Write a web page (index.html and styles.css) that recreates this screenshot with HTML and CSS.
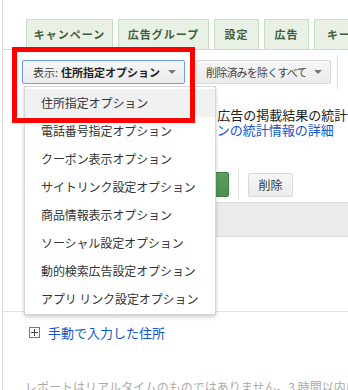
FILE: index.html
```html
<!DOCTYPE html>
<html lang="ja">

<head>
    <meta charset="utf-8">
    <meta name="viewport" content="width=device-width, initial-scale=1.0">
    <title>住所表示オプション</title>
    <link rel="stylesheet" href="styles.css">
</head>

<body>
    <div class="page">
        <nav class="tabs">
            <div class="tab t1">キャンペーン</div>
            <div class="tab t2">広告グループ</div>
            <div class="tab t3">設定</div>
            <div class="tab t4">広告</div>
            <div class="tab t5">キーワード</div>
        </nav>

        <div class="toolbar">
            <button class="knap aktiv">表示: <b>住所指定オプション</b><span class="pil"></span></button>
            <button class="knap slet">削除済みを除くすべて<span class="pil"></span></button>
            <span class="skille"></span>
        </div>

        <div class="stats">
            <p>このキャンペーンに含まれる広告の掲載結果の統計情報</p>
            <p>詳細については、<a href="#">キャンペーンの統計情報の詳細</a></p>
        </div>

        <div class="actions">
            <button class="gron">+ 住所表示オプション</button>
            <span class="lodret"></span>
            <button class="knap lille">削除</button>
        </div>

        <div class="band"></div>

        <div class="linje"></div>

        <div class="manuel">
            <span class="plus"></span>
            <a href="#">手動で入力した住所</a>
        </div>

        <p class="note">レポートはリアルタイムのものではありません。3 時間以内に発生したクリック</p>

        <ul class="menu">
            <li class="valgt">住所指定オプション</li>
            <li>電話番号指定オプション</li>
            <li>クーポン表示オプション</li>
            <li>サイトリンク設定オプション</li>
            <li>商品情報表示オプション</li>
            <li>ソーシャル設定オプション</li>
            <li>動的検索広告設定オプション</li>
            <li>アプリ リンク設定オプション</li>
        </ul>

        <div class="ramme"></div>
    </div>
</body>

</html>
```

FILE: styles.css
```css
body {
    margin: 0;
    font-family: "Noto Sans CJK JP", "Liberation Sans", sans-serif;
    color: #222;
    background-color: white;
    overflow: hidden;
}

.page {
    position: relative;
    margin-left: 2px;
    border-left: 1px solid #dcdcdc;
    height: 390px;
    overflow: hidden;
}

/* faner */
.tabs {
    display: flex;
    gap: 5px;
    padding-top: 19px;
    padding-left: 23px;
    border-bottom: 1px solid #c9dcc4;
}

.tab {
    flex: none;
    height: 30px;
    box-sizing: border-box;
    border: 1px solid #c9dcc4;
    border-bottom: none;
    background-color: #e9f1e6;
    color: #3f5d3d;
    font-size: 11px;
    font-weight: bold;
    letter-spacing: 1px;
    line-height: 29px;
    text-align: center;
}

.t1 { width: 87px; }
.t2 { width: 91px; }
.t3 { width: 45px; }
.t4 { width: 45px; }
.t5 { width: 90px; text-align: left; padding-left: 12px; }

/* knapper */
.toolbar {
    display: flex;
    align-items: center;
    margin-top: 10px;
    padding-left: 19px;
    height: 24px;
}

.knap {
    display: flex;
    align-items: center;
    height: 24px;
    box-sizing: border-box;
    border: 1px solid #d9d9d9;
    border-radius: 2px;
    background: linear-gradient(#f6f6f6, #ececec);
    font-family: "Noto Sans CJK JP", sans-serif;
    font-size: 11px;
    color: #444;
    padding: 0 8px 0 10px;
    white-space: nowrap;
}

.knap b {
    color: #222;
    margin-left: 3px;
}

.aktiv {
    width: 163px;
    border-color: #6d9eeb;
}

.slet {
    width: 135px;
    margin-left: 11px;
    padding-left: 9px;
    letter-spacing: -0.8px;
}

.pil {
    width: 0;
    height: 0;
    border-left: 4px solid transparent;
    border-right: 4px solid transparent;
    border-top: 4px solid #777;
    margin-left: auto;
}

.skille {
    width: 1px;
    height: 34px;
    background-color: #dcdcdc;
    margin-left: 6px;
}

/* statistik */
.stats {
    margin-top: 23px;
    padding-left: 46px;
    font-size: 13px;
    line-height: 15px;
    white-space: nowrap;
}

.stats p {
    margin: 0;
}

a {
    color: #1155cc;
    text-decoration: none;
}

.actions {
    display: flex;
    align-items: center;
    margin-top: 35px;
    padding-left: 26px;
    height: 25px;
}

.gron {
    width: 200px;
    height: 25px;
    border: 1px solid #3f7f43;
    border-radius: 2px;
    background: linear-gradient(#5aa05e, #4f8f52);
    color: white;
    font-size: 11px;
}

.lodret {
    width: 1px;
    height: 31px;
    background-color: #e3e3e3;
    margin-left: 9px;
}

.lille {
    width: 45px;
    height: 24px;
    margin-left: 9px;
    padding: 0;
    justify-content: center;
    font-size: 12px;
    color: #333;
}

.band {
    margin-top: 5px;
    margin-left: 23px;
    height: 33px;
    background-color: #ebebeb;
    border-top: 1px solid #dcdcdc;
    border-bottom: 1px solid #dcdcdc;
}

.linje {
    margin-top: 74px;
    border-top: 1px solid #e0e0e0;
}

.manuel {
    display: flex;
    align-items: center;
    margin-top: 15px;
    padding-left: 26px;
    font-size: 13px;
    height: 11px;
}

.plus {
    position: relative;
    width: 9px;
    height: 9px;
    border: 1px solid #777;
    margin-right: 8px;
}

.plus::before,
.plus::after {
    content: "";
    position: absolute;
    background-color: #444;
}

.plus::before {
    left: 1px;
    top: 4px;
    width: 7px;
    height: 1px;
}

.plus::after {
    left: 4px;
    top: 1px;
    width: 1px;
    height: 7px;
}

.note {
    margin: 40px 0 0 22px;
    font-size: 12px;
    color: #aaa;
    white-space: nowrap;
}

/* rullemenu */
.menu {
    position: absolute;
    left: 21px;
    top: 86px;
    width: 190px;
    margin: 0;
    padding: 2px 0 1px;
    list-style: none;
    background-color: white;
    border: 1px solid #d6d6d6;
    box-shadow: 0 2px 4px rgba(0, 0, 0, 0.2);
}

.menu li {
    height: 28px;
    line-height: 28px;
    padding-left: 16px;
    font-size: 12px;
    letter-spacing: -0.1px;
    color: #333;
    white-space: nowrap;
}

.menu .valgt {
    background-color: #f1f1f1;
}

.ramme {
    position: absolute;
    left: 9px;
    top: 47px;
    width: 173px;
    height: 66px;
    border: 5px solid #ff0000;
}
```
